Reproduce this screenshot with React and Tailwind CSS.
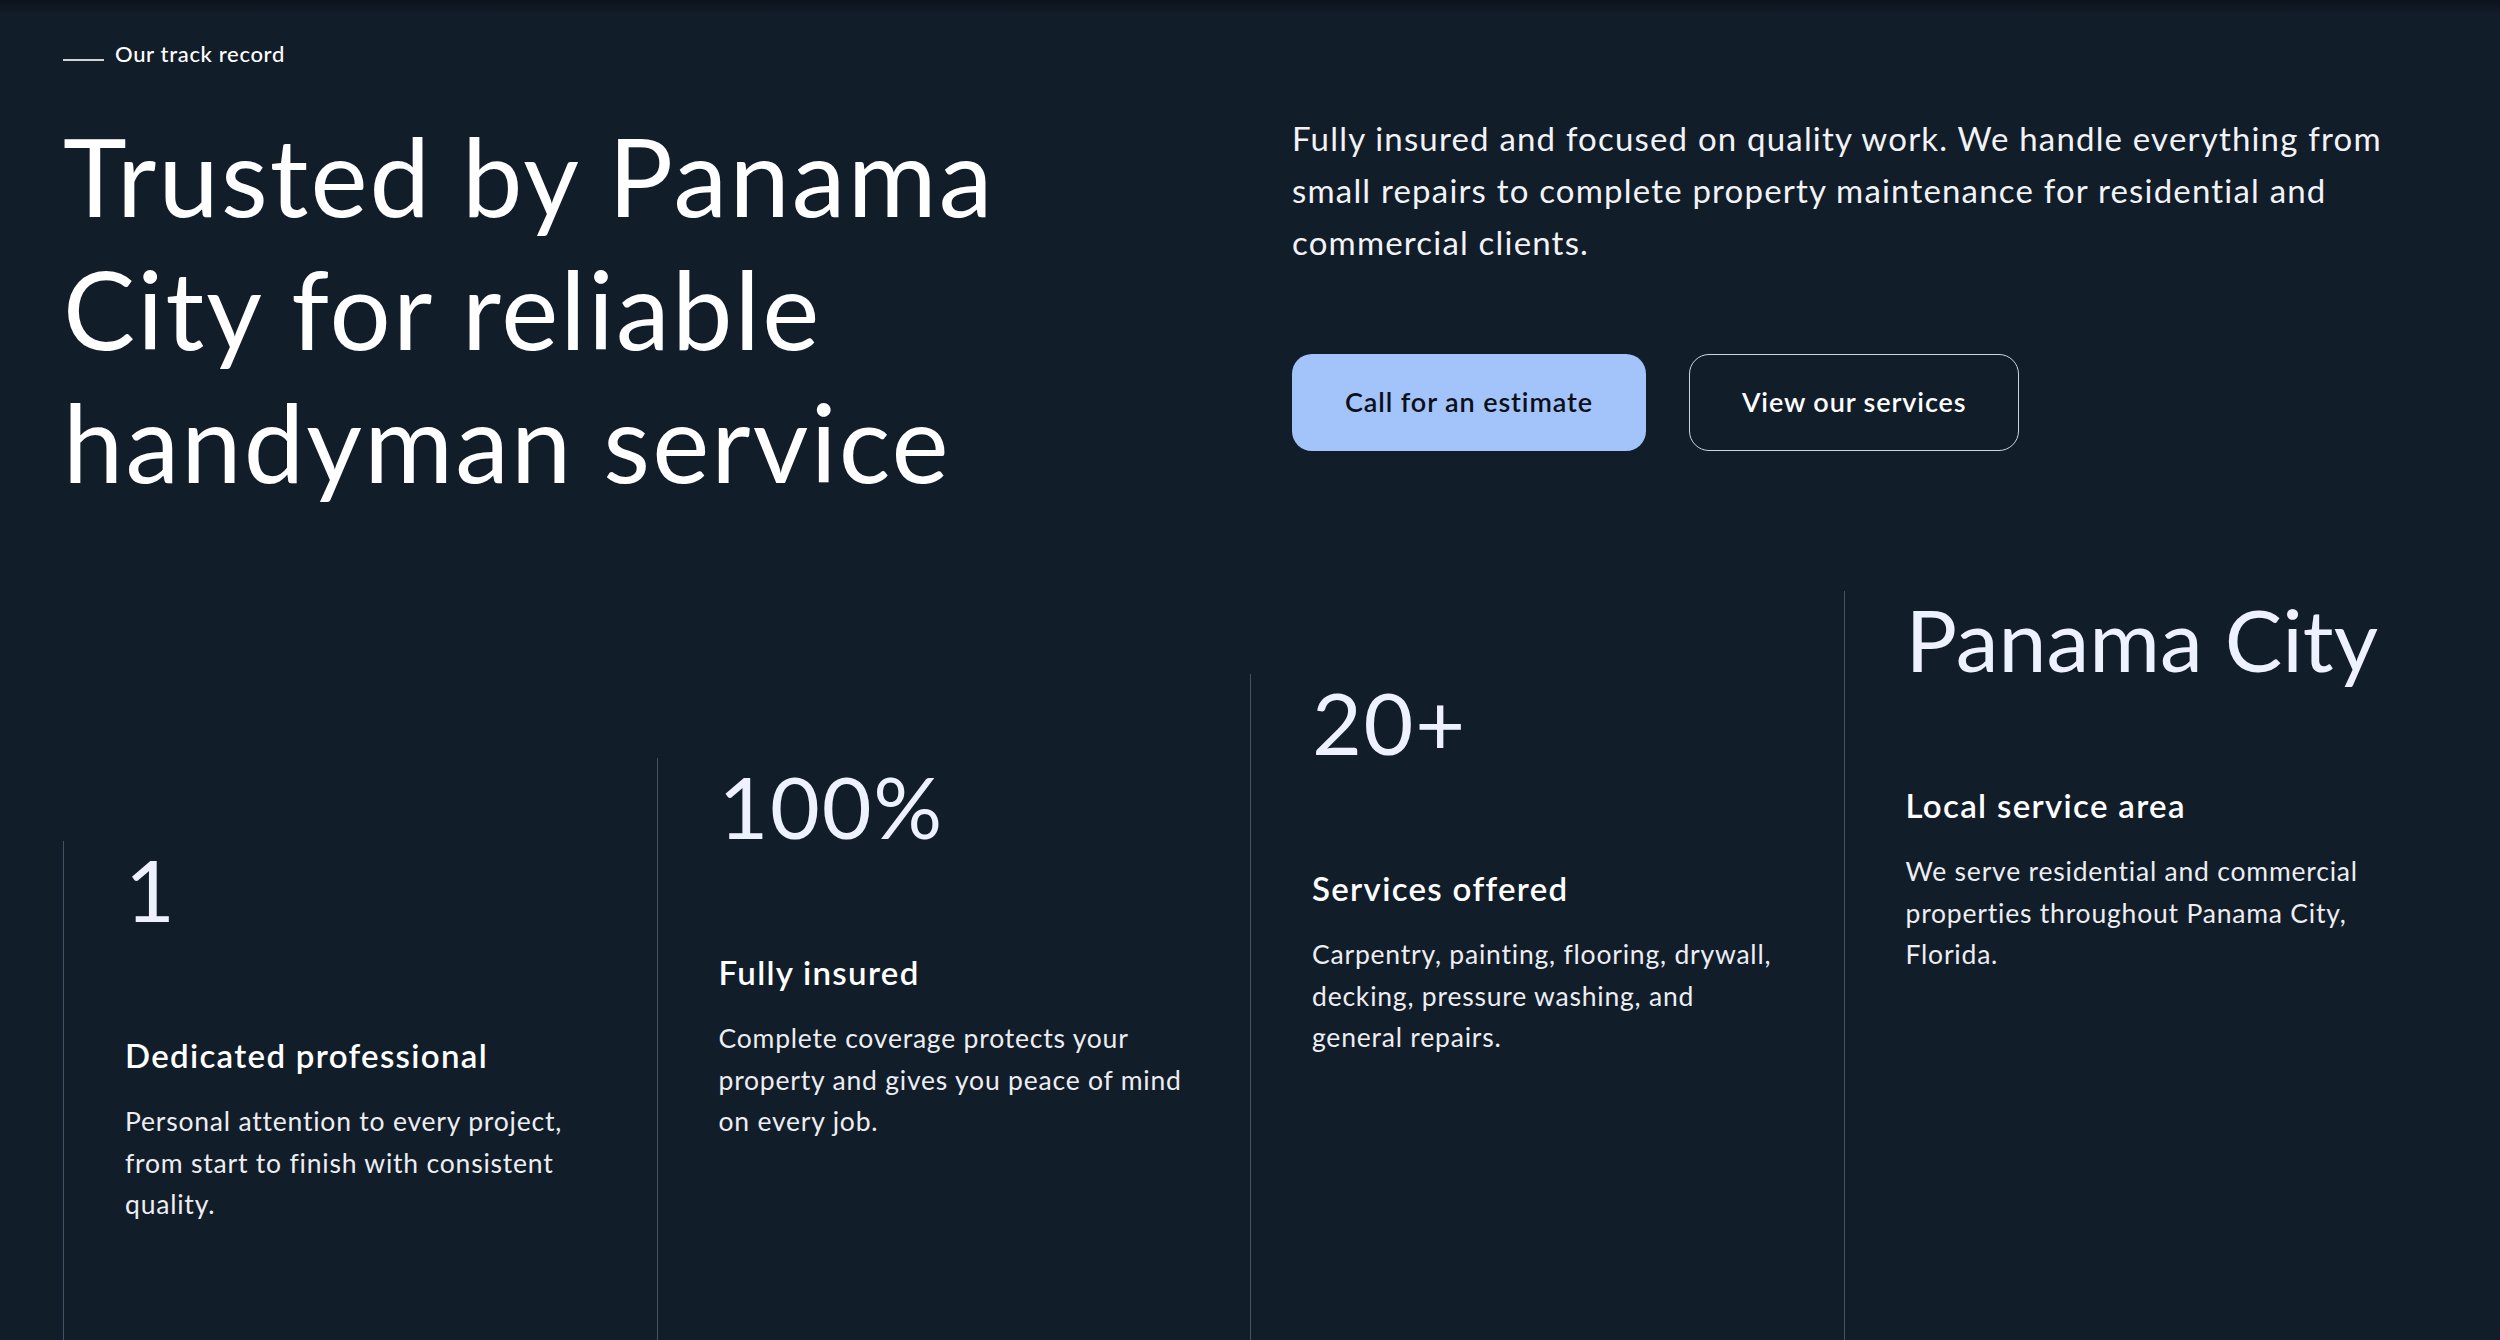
const stats = [
  {
    value: '1',
    title: 'Dedicated professional',
    lines: ['Personal attention to every project,', 'from start to finish with consistent', 'quality.'],
    offset: 'mt-[250px]',
    track: 'tracking-[0.02em]',
  },
  {
    value: '100%',
    title: 'Fully insured',
    lines: ['Complete coverage protects your', 'property and gives you peace of mind', 'on every job.'],
    offset: 'mt-[167px]',
    track: 'tracking-[0.02em]',
  },
  {
    value: '20+',
    title: 'Services offered',
    lines: ['Carpentry, painting, flooring, drywall,', 'decking, pressure washing, and', 'general repairs.'],
    offset: 'mt-[83px]',
    track: 'tracking-[0.02em]',
  },
  {
    value: 'Panama City',
    title: 'Local service area',
    lines: ['We serve residential and commercial', 'properties throughout Panama City,', 'Florida.'],
    offset: 'mt-0',
    track: 'tracking-normal',
  },
];

export default function App() {
  return (
    <div className="relative h-[1340px] overflow-hidden bg-[#121d2a] font-['Lato',sans-serif] text-white">
      <div className="pointer-events-none absolute inset-x-0 top-0 h-[14px] bg-gradient-to-b from-[#0c131c] to-transparent" />

      <section className="px-[63px] pt-[36px]">
        <div className="flex h-[34px] items-center gap-[11px]">
          <span className="mt-[14px] h-[2px] w-[41px] bg-white/80" />
          <span className="text-[22px] font-medium tracking-[0.03em]">Our track record</span>
        </div>

        <div className="mt-[39px] grid grid-cols-2 gap-[84px]">
          <h1 className="text-[108px] font-normal leading-[133px] tracking-[0.02em] text-white">
            Trusted by Panama
            <br />
            City for reliable
            <br />
            handyman service
          </h1>

          <div className="pt-[3px]">
            <p className="text-[33px] leading-[52px] tracking-[0.036em] text-[#f1f3f6] whitespace-nowrap">
              Fully insured and focused on quality work. We handle everything from
              <br />
              small repairs to complete property maintenance for residential and
              <br />
              commercial clients.
            </p>
            <div className="mt-[86px] flex gap-[43px]">
              <button className="h-[97px] rounded-[20px] bg-[#a3c3fb] px-[53px] text-[27px] font-semibold tracking-[0.033em] text-[#0b1019]">
                Call for an estimate
              </button>
              <button className="h-[97px] rounded-[20px] border-[1.5px] border-[#cfd4dc] px-[52px] text-[27px] font-semibold tracking-[0.033em] text-white">
                View our services
              </button>
            </div>
          </div>
        </div>

        <div className="mt-[83px] grid grid-cols-4 items-start">
          {stats.map((s) => (
            <div key={s.title} className={`${s.offset} border-l border-[#465264] pl-[61px] pb-[700px]`}>
              <div className={`${s.track} pt-[5px] text-[86px] leading-[86px] whitespace-nowrap text-[#eef1fe]`}>{s.value}</div>
              <h3 className="mt-[103px] text-[33px] font-semibold leading-[40px] tracking-[0.04em] text-white">{s.title}</h3>
              <p className="mt-[26px] text-[26.5px] leading-[41.6px] tracking-[0.03em] text-[#eceef2] whitespace-nowrap">
                {s.lines.map((l, i) => (
                  <span key={i} className="block">{l}</span>
                ))}
              </p>
            </div>
          ))}
        </div>
      </section>
    </div>
  );
}
